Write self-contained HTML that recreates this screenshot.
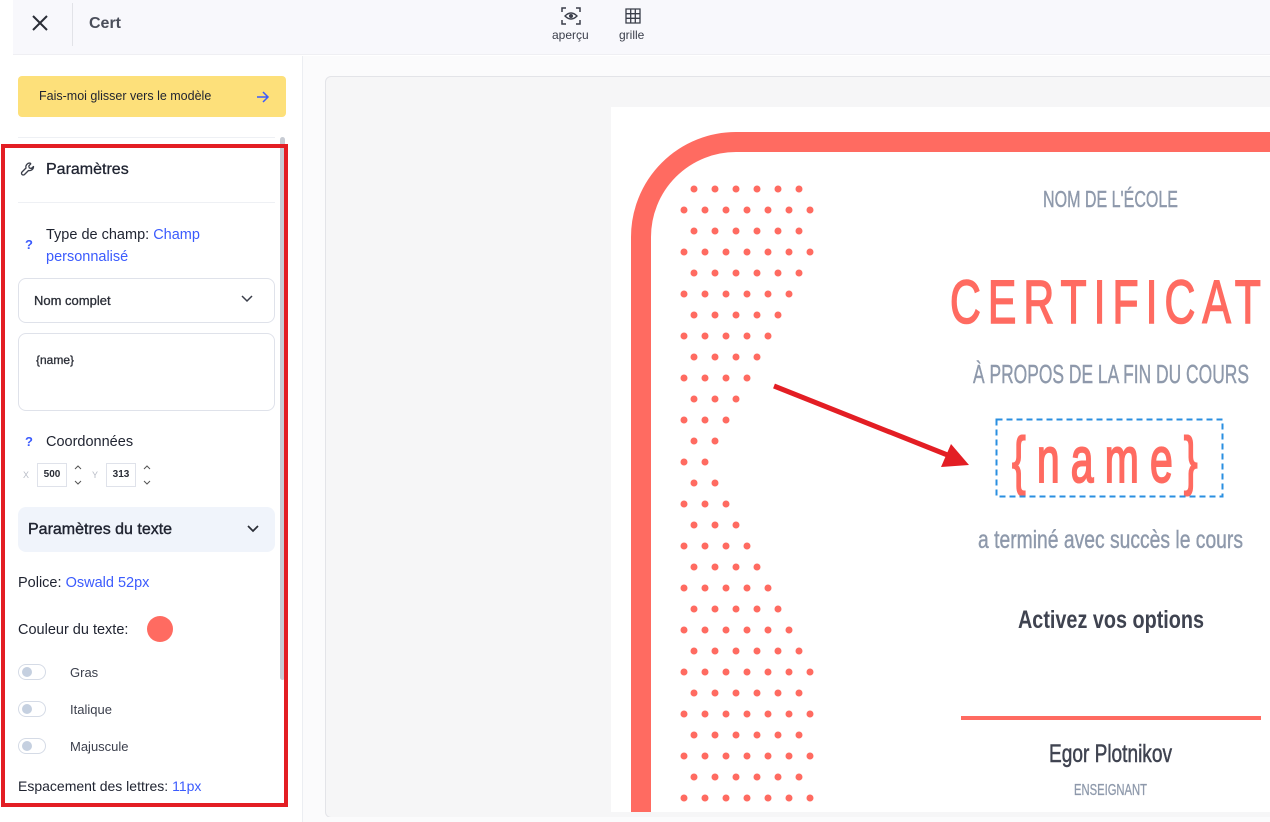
<!DOCTYPE html>
<html><head><meta charset="utf-8"><style>
*{box-sizing:border-box;margin:0;padding:0}
body{width:1270px;height:822px;overflow:hidden;background:#fff;font-family:"Liberation Sans",sans-serif;position:relative;color:#1f2330}
.a{position:absolute}
.blue{color:#3b5bfd}
.tog{position:absolute;left:18px;width:28px;height:16px;border:1px solid #d5dbe6;border-radius:8px;background:#fff}
.tog:after{content:"";position:absolute;left:3px;top:2px;width:10px;height:10px;border-radius:50%;background:#c5d0e0}
.tl{position:absolute;left:70px;font-size:13px;color:#3b3f4c}
</style></head><body>
<div class="a" style="left:13px;top:0;width:1257px;height:55px;background:#f8f8fc;border-bottom:1px solid #efeff3"></div>
<svg class="a" style="left:30px;top:13px" width="20" height="20" viewBox="0 0 20 20"><path d="M3 3L17 17M17 3L3 17" stroke="#2a2d36" stroke-width="2"/></svg>
<div class="a" style="left:72px;top:3px;width:1px;height:43px;background:#e2e3e8"></div>
<div class="a" style="left:89px;top:15px;font-size:16px;font-weight:bold;color:#4a4e5a">Cert</div>
<svg class="a" style="left:561px;top:7px" width="20" height="18" viewBox="0 0 20 18"><path d="M1 5V1H5M15 1H19V5M19 13V17H15M5 17H1V13" fill="none" stroke="#3a3e4a" stroke-width="1.5"/><path d="M4 9Q10 3 16 9Q10 15 4 9Z" fill="none" stroke="#3a3e4a" stroke-width="1.4"/><circle cx="10" cy="9" r="2" fill="#3a3e4a"/></svg>
<div class="a" style="left:552px;top:28px;font-size:12px;color:#3a3e4a">aperçu</div>
<svg class="a" style="left:625px;top:8px" width="16" height="16" viewBox="0 0 16 16"><path d="M1 1H15V15H1ZM1 5.7H15M1 10.3H15M5.7 1V15M10.3 1V15" fill="none" stroke="#3a3e4a" stroke-width="1.3"/></svg>
<div class="a" style="left:619px;top:28px;font-size:12px;color:#3a3e4a">grille</div>

<div class="a" style="left:302px;top:56px;width:1px;height:766px;background:#eceef2"></div>
<div class="a" style="left:18px;top:76px;width:268px;height:41px;background:#fde07a;border-radius:4px"></div>
<div class="a" style="left:39px;top:89px;font-size:12.5px;color:#1f2330">Fais-moi glisser vers le modèle</div>
<svg class="a" style="left:256px;top:90px" width="14" height="14" viewBox="0 0 14 14"><path d="M1 7H12M7 2L12 7L7 12" fill="none" stroke="#3b5bfd" stroke-width="1.5"/></svg>
<div class="a" style="left:18px;top:137px;width:257px;height:1px;background:#eef0f4"></div>
<div class="a" style="left:280px;top:137px;width:5px;height:543px;background:#c8ccd4;border-radius:3px"></div>
<div class="a" style="left:1px;top:144px;width:287px;height:663px;border:4px solid #e31e24"></div>
<svg class="a" style="left:20px;top:161px" width="16" height="16" viewBox="0 0 16 16"><path d="M10 2a4 4 0 0 0-4 5L2 11a1.5 1.5 0 0 0 2.5 2.5L8.5 9.5a4 4 0 0 0 5-4l-2.2 2-2-.5-.5-2 2-2.2Z" fill="none" stroke="#3a3e4a" stroke-width="1.3" stroke-linejoin="round"/></svg>
<div class="a" style="left:46px;top:161px;font-size:16px;color:#1f2330;-webkit-text-stroke:0.3px #1f2330">Paramètres</div>
<div class="a" style="left:18px;top:202px;width:257px;height:1px;background:#eef0f4"></div>
<div class="a blue" style="left:25px;top:237px;font-size:13px;font-weight:bold">?</div>
<div class="a" style="left:46px;top:224px;font-size:14.5px;line-height:22px;width:200px">Type de champ: <span class="blue">Champ personnalisé</span></div>
<div class="a" style="left:18px;top:278px;width:257px;height:45px;border:1px solid #dfe2ea;border-radius:8px"></div>
<div class="a" style="left:34px;top:293px;font-size:13px;color:#2a2d36;-webkit-text-stroke:0.3px #2a2d36">Nom complet</div>
<svg class="a" style="left:240px;top:294px" width="14" height="10" viewBox="0 0 14 10"><path d="M2 2L7 7L12 2" fill="none" stroke="#3a3e4a" stroke-width="1.5"/></svg>
<div class="a" style="left:18px;top:333px;width:257px;height:78px;border:1px solid #dfe2ea;border-radius:8px"></div>
<div class="a" style="left:36px;top:353px;font-size:12px;color:#2a2d36;-webkit-text-stroke:0.3px #2a2d36">{name}</div>
<div class="a blue" style="left:25px;top:434px;font-size:13px;font-weight:bold">?</div>
<div class="a" style="left:46px;top:434px;font-size:14.5px">Coordonnées</div>
<div class="a" style="left:23px;top:470px;font-size:9px;color:#b8bcc6">X</div>
<div class="a" style="left:37px;top:463px;width:30px;height:24px;border:1px solid #dfe2ea;font-size:10px;font-weight:bold;text-align:center;line-height:22px;color:#2a2d36">500</div>
<svg class="a" style="left:73px;top:463px" width="10" height="24" viewBox="0 0 10 24"><path d="M2 6L5 3L8 6M2 18L5 21L8 18" fill="none" stroke="#555" stroke-width="1"/></svg>
<div class="a" style="left:92px;top:470px;font-size:9px;color:#b8bcc6">Y</div>
<div class="a" style="left:106px;top:463px;width:30px;height:24px;border:1px solid #dfe2ea;font-size:10px;font-weight:bold;text-align:center;line-height:22px;color:#2a2d36">313</div>
<svg class="a" style="left:142px;top:463px" width="10" height="24" viewBox="0 0 10 24"><path d="M2 6L5 3L8 6M2 18L5 21L8 18" fill="none" stroke="#555" stroke-width="1"/></svg>
<div class="a" style="left:18px;top:507px;width:257px;height:45px;background:#f0f4fb;border-radius:8px"></div>
<div class="a" style="left:28px;top:521px;font-size:16px;color:#1f2330;-webkit-text-stroke:0.4px #1f2330">Paramètres du texte</div>
<svg class="a" style="left:246px;top:524px" width="14" height="10" viewBox="0 0 14 10"><path d="M2 2L7 7L12 2" fill="none" stroke="#2a2d36" stroke-width="1.7"/></svg>
<div class="a" style="left:18px;top:575px;font-size:14.5px">Police: <span class="blue">Oswald 52px</span></div>
<div class="a" style="left:18px;top:622px;font-size:14.5px">Couleur du texte:</div>
<div class="a" style="left:147px;top:616px;width:26px;height:26px;border-radius:50%;background:#ff6b61"></div>
<div class="tog" style="top:664px"></div><div class="tl" style="top:665px">Gras</div>
<div class="tog" style="top:701px"></div><div class="tl" style="top:702px">Italique</div>
<div class="tog" style="top:738px"></div><div class="tl" style="top:739px">Majuscule</div>
<div class="a" style="left:18px;top:778px;font-size:14px">Espacement des lettres: <span class="blue">11px</span></div>

<div class="a" style="left:303px;top:56px;width:967px;height:766px;background:#fbfbfc"></div>
<div class="a" style="left:325px;top:76px;width:960px;height:742px;background:#f6f6f7;border:1px solid #e3e4e8;border-radius:6px"></div>
<svg class="a" style="left:0;top:0" width="1270" height="822">
<rect x="611" y="107" width="670" height="705" fill="#fff"/>
<path d="M641 812V237A95 95 0 0 1 736 142H1290" fill="none" stroke="#ff6b61" stroke-width="20"/>
<g stroke="#ff6b61" stroke-width="7" stroke-linecap="round" stroke-dasharray="0 21">
<line x1="694" y1="189" x2="799.1" y2="189"/><line x1="684" y1="210" x2="810.1" y2="210"/>
<line x1="694" y1="231" x2="799.1" y2="231"/><line x1="684" y1="252" x2="810.1" y2="252"/>
<line x1="694" y1="273" x2="799.1" y2="273"/><line x1="684" y1="294" x2="789.1" y2="294"/>
<line x1="694" y1="315" x2="778.1" y2="315"/><line x1="684" y1="336" x2="768.1" y2="336"/>
<line x1="694" y1="357" x2="757.1" y2="357"/><line x1="684" y1="378" x2="747.1" y2="378"/>
<line x1="694" y1="399" x2="736.1" y2="399"/><line x1="684" y1="420" x2="726.1" y2="420"/>
<line x1="694" y1="441" x2="715.1" y2="441"/><line x1="684" y1="462" x2="705.1" y2="462"/>
<line x1="694" y1="483" x2="715.1" y2="483"/><line x1="684" y1="504" x2="726.1" y2="504"/>
<line x1="694" y1="525" x2="736.1" y2="525"/><line x1="684" y1="546" x2="747.1" y2="546"/>
<line x1="694" y1="567" x2="757.1" y2="567"/><line x1="684" y1="588" x2="768.1" y2="588"/>
<line x1="694" y1="609" x2="778.1" y2="609"/><line x1="684" y1="630" x2="789.1" y2="630"/>
<line x1="694" y1="651" x2="799.1" y2="651"/><line x1="684" y1="672" x2="810.1" y2="672"/>
<line x1="694" y1="693" x2="799.1" y2="693"/><line x1="684" y1="714" x2="810.1" y2="714"/>
<line x1="694" y1="735" x2="799.1" y2="735"/><line x1="684" y1="756" x2="810.1" y2="756"/>
<line x1="694" y1="777" x2="799.1" y2="777"/><line x1="684" y1="798" x2="810.1" y2="798"/>
</g>
<g font-family="Liberation Sans, sans-serif">
<text x="1043" y="207" font-size="23" fill="#8e99ab" stroke="#8e99ab" stroke-width="0.4" textLength="135" lengthAdjust="spacingAndGlyphs">NOM DE L'ÉCOLE</text>
<g transform="translate(950,323) scale(0.7,1)"><text x="0" y="0" font-size="61" fill="#ff6b61" stroke="#ff6b61" stroke-width="1.6" textLength="444" lengthAdjust="spacing">CERTIFICAT</text></g>
<text x="973" y="383" font-size="26" fill="#8e99ab" stroke="#8e99ab" stroke-width="0.4" textLength="276" lengthAdjust="spacingAndGlyphs">À PROPOS DE LA FIN DU COURS</text>
<g transform="translate(1012,482) scale(0.64,1)"><text x="0" y="0" font-size="64" fill="#ff6b61" stroke="#ff6b61" stroke-width="2" textLength="290" lengthAdjust="spacing">{name}</text></g>
<text x="978" y="548" font-size="25" fill="#8e99ab" stroke="#8e99ab" stroke-width="0.4" textLength="265" lengthAdjust="spacingAndGlyphs">a terminé avec succès le cours</text>
<text x="1018" y="628" font-size="25" font-weight="bold" fill="#3f4350" textLength="186" lengthAdjust="spacingAndGlyphs">Activez vos options</text>
<text x="1049" y="762" font-size="25" fill="#3f4350" stroke="#3f4350" stroke-width="0.5" textLength="123" lengthAdjust="spacingAndGlyphs">Egor Plotnikov</text>
<text x="1074" y="795" font-size="16" fill="#8e99ab" stroke="#8e99ab" stroke-width="0.3" textLength="73" lengthAdjust="spacingAndGlyphs">ENSEIGNANT</text>
</g>
<rect x="996.5" y="419.5" width="226" height="77" fill="none" stroke="#2a8fe0" stroke-width="2" stroke-dasharray="6 4"/>
<rect x="961" y="716" width="300" height="4" fill="#ff6b61"/>
<line x1="774" y1="386" x2="950" y2="456" stroke="#e31e24" stroke-width="5"/>
<polygon points="951,444 969,465 941,467" fill="#e31e24"/>
<rect x="303" y="817" width="967" height="5" fill="#fbfbfc"/>
</svg>
</body></html>
